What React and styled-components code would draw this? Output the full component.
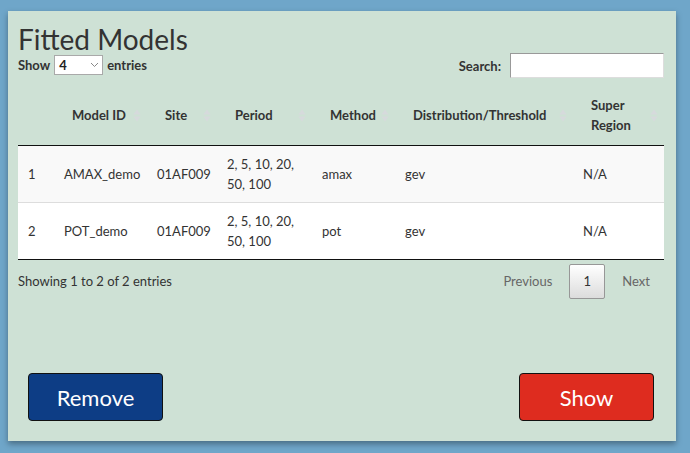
import React from "react";
import styled, { createGlobalStyle } from "styled-components";

const GlobalStyle = createGlobalStyle`
  body {
    margin: 0;
    background: #6fa6c9;
    font-family: "Source Sans Pro", Lato, "Liberation Sans", sans-serif;
    color: #333;
  }
`;

const Page = styled.div`
  width: 690px;
  height: 453px;
  padding: 11px 0 0 8px;
  box-sizing: border-box;
`;

const Panel = styled.div`
  width: 668px;
  height: 430px;
  background: #cee1d5;
  box-shadow: 0 3px 6px rgba(0, 0, 0, 0.35);
  padding: 12px 12px 20px 10px;
  box-sizing: border-box;
  display: flex;
  flex-direction: column;
`;

const Title = styled.h2`
  margin: 0;
  font-size: 28px;
  font-weight: 400;
  line-height: 32px;
  color: #333;
`;

const Controls = styled.div`
  display: flex;
  justify-content: space-between;
  align-items: flex-start;
  font-size: 13px;
  font-weight: 700;
`;

const Label = styled.label`
  display: flex;
  align-items: center;
  gap: 4px;
  margin-top: ${(p) => p.$top || 0}px;
`;

const Select = styled.div`
  width: 49px;
  height: 20px;
  box-sizing: border-box;
  border: 1px solid #a9a9a9;
  background: #fff;
  display: flex;
  align-items: center;
  justify-content: space-between;
  padding: 0 3px 0 4px;
  font-weight: 700;
  font-size: 13px;
  color: #222;
`;

const Input = styled.div`
  width: 154px;
  height: 25px;
  box-sizing: border-box;
  border: 1px solid #999;
  border-right-color: #ddd;
  border-bottom-color: #ddd;
  background: #fff;
  margin-left: 5px;
`;

const Table = styled.table`
  width: 646px;
  border-collapse: collapse;
  table-layout: fixed;
  margin-top: 17px;
  font-size: 13px;
  border-bottom: 1px solid #111;
`;

const Th = styled.th`
  position: relative;
  height: 50px;
  padding: 0 18px 10px 18px;
  box-sizing: border-box;
  font-weight: 700;
  text-align: left;
  vertical-align: middle;
  line-height: 20px;
  border-bottom: 1px solid #111;
  color: #333;
`;

const SortIcon = styled.svg`
  position: absolute;
  right: 6px;
  top: 14px;
`;

const Tr = styled.tr`
  background: ${(p) => (p.$odd ? "#f9f9f9" : "#fff")};
  border-top: ${(p) => (p.$odd ? "none" : "1px solid #ddd")};
`;

const Td = styled.td`
  height: 57px;
  padding: 0 10px;
  box-sizing: border-box;
  line-height: 20px;
  vertical-align: middle;
`;

const Footer = styled.div`
  display: flex;
  justify-content: space-between;
  align-items: flex-start;
  font-size: 13px;
  margin-top: 3px;
`;

const Info = styled.div`
  padding-top: 10px;
`;

const Pager = styled.div`
  display: flex;
  align-items: center;
  margin-right: 4px;
`;

const PageLink = styled.span`
  color: #666;
  padding: 0 10px;
  line-height: 36px;
`;

const PageCurrent = styled.span`
  width: 36px;
  height: 35px;
  box-sizing: border-box;
  border: 1px solid #979797;
  border-radius: 2px;
  background: linear-gradient(to bottom, #fff 0%, #dcdcdc 100%);
  display: flex;
  align-items: center;
  justify-content: center;
  margin: 0 7px;
  color: #333;
`;

const Actions = styled.div`
  margin-top: auto;
  display: flex;
  justify-content: space-between;
  padding: 0 10px 0 10px;
`;

const Button = styled.button`
  width: 135px;
  height: 48px;
  border: 1px solid #111;
  border-radius: 4px;
  background: ${(p) => p.$bg};
  color: #fff;
  font-family: inherit;
  font-size: 22px;
  cursor: pointer;
`;

const Sort = () => (
  <SortIcon width="8" height="13" viewBox="0 0 8 13">
    <path d="M4 0.5 L7.5 5.5 H0.5 Z M4 12.5 L7.5 7.5 H0.5 Z" fill="#d6dadc" />
  </SortIcon>
);

const columns = [
  { w: 36, label: "" },
  { w: 93, label: "Model ID" },
  { w: 70, label: "Site" },
  { w: 95, label: "Period" },
  { w: 83, label: "Method" },
  { w: 178, label: "Distribution/Threshold" },
  { w: 91, label: "Super Region" },
];

const rows = [
  ["1", "AMAX_demo", "01AF009", "2, 5, 10, 20, 50, 100", "amax", "gev", "N/A"],
  ["2", "POT_demo", "01AF009", "2, 5, 10, 20, 50, 100", "pot", "gev", "N/A"],
];

const Chevron = () => (
  <svg width="9" height="6" viewBox="0 0 9 6">
    <path d="M1 1 L4.5 4.5 L8 1" stroke="#888" strokeWidth="1" fill="none" />
  </svg>
);

export default function App() {
  return (
    <Page>
      <GlobalStyle />
      <Panel>
        <Title>Fitted Models</Title>
        <Controls>
          <Label>
            Show
            <Select>
              4
              <Chevron />
            </Select>
            entries
          </Label>
          <Label $top={-2}>
            Search:
            <Input />
          </Label>
        </Controls>
        <Table>
          <colgroup>
            {columns.map((c, i) => (
              <col key={i} style={{ width: c.w }} />
            ))}
          </colgroup>
          <thead>
            <tr>
              {columns.map((c, i) => (
                <Th key={i}>
                  {c.label}
                  {i > 0 && <Sort />}
                </Th>
              ))}
            </tr>
          </thead>
          <tbody>
            {rows.map((r, i) => (
              <Tr key={i} $odd={i % 2 === 0}>
                {r.map((cell, j) => (
                  <Td key={j}>{cell}</Td>
                ))}
              </Tr>
            ))}
          </tbody>
        </Table>
        <Footer>
          <Info>Showing 1 to 2 of 2 entries</Info>
          <Pager>
            <PageLink>Previous</PageLink>
            <PageCurrent>1</PageCurrent>
            <PageLink>Next</PageLink>
          </Pager>
        </Footer>
        <Actions>
          <Button $bg="#0d3d85">Remove</Button>
          <Button $bg="#de2c1f">Show</Button>
        </Actions>
      </Panel>
    </Page>
  );
}
